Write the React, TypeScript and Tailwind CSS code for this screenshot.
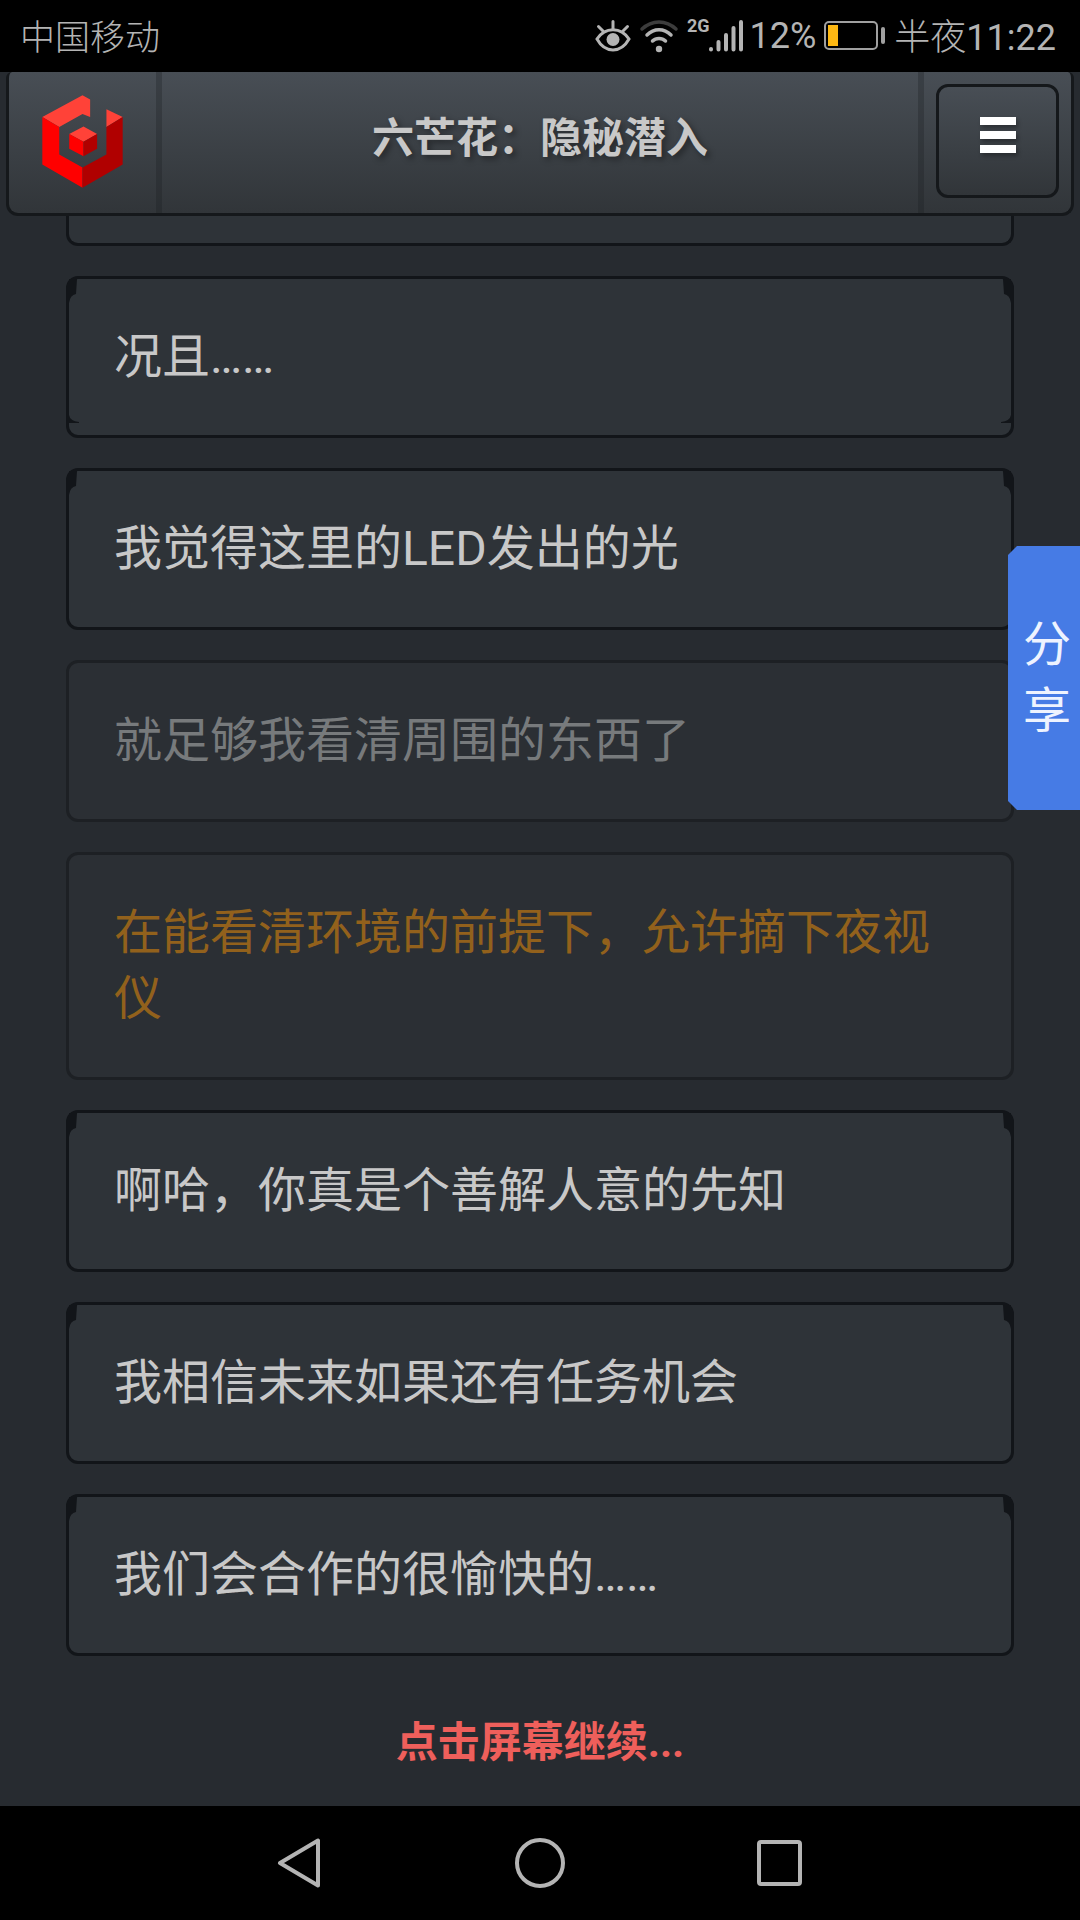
import React from 'react';

type Message = {
    text: string;
    kind: 'active' | 'muted' | 'choice';
    notched?: boolean;
};

const messages: Message[] = [
    { text: '况且……', kind: 'active', notched: true },
    { text: '我觉得这里的LED发出的光', kind: 'active' },
    { text: '就足够我看清周围的东西了', kind: 'muted' },
    { text: '在能看清环境的前提下，允许摘下夜视仪', kind: 'choice' },
    { text: '啊哈，你真是个善解人意的先知', kind: 'active' },
    { text: '我相信未来如果还有任务机会', kind: 'active' },
    { text: '我们会合作的很愉快的……', kind: 'active' },
];

const cardStyles = {
    active: 'border-[#121519] bg-[#2e3338] text-[#c8c8c8]',
    muted: 'border-[#1d2024] bg-[#2b2f34] text-[#777a7c]',
    choice: 'border-[#1d2024] bg-[#2b2f34] text-[#92611c]',
};

const Logo: React.FC = () => (
    <svg viewBox="120 280 256 288" className="w-[85px] h-24" aria-hidden="true">
        <path d="M127 352 L248 286 L271 299 V352 L248 343 L178 382 Z" fill="#ff4238" />
        <path d="M320 328 L369 352 L320 382 Z" fill="#ff4238" />
        <path d="M127 352 L178 382 V465 L248 504 V565 L127 495 Z" fill="#ff0000" />
        <path d="M369 352 V495 L248 565 V504 L320 465 V382 Z" fill="#b00000" />
        <path d="M251 380 L292 403 L251 426 L208 403 Z" fill="#ff4238" />
        <path d="M208 403 L251 426 V470 L208 447 Z" fill="#ff0000" />
        <path d="M292 403 V447 L251 470 V426 Z" fill="#b00000" />
    </svg>
);

const StatusBar: React.FC = () => (
    <div className="h-[72px] bg-black text-[#b4b4b4] flex items-center justify-between pl-5 pr-6 pt-1 text-4xl font-light">
        <span className="text-[35px] pt-0.5">中国移动</span>
        <div className="flex items-center">
            <div className="flex items-center pb-1">
                <svg viewBox="0 0 36 32" className="w-9 h-8 mr-2" fill="none" stroke="currentColor" strokeWidth="3" strokeLinecap="round">
                    <path d="M2 19 C10 6.500 26 6.500 34 19 C26 33.500 10 33.500 2 19 Z" />
                    <path d="M18 9 V1.500 M8 11 L3.500 6.500 M28 11 L32.500 6.500" />
                    <circle cx="18" cy="19.500" r="6.500" fill="currentColor" stroke="none" />
                </svg>
                <svg viewBox="0 0 40 34" className="w-10 h-[34px] mr-2" fill="none" stroke="currentColor" strokeWidth="3.500" strokeLinecap="round">
                    <path d="M3 10 C13 0.500 27 0.500 37 10" stroke="#3c3c3c" />
                    <path d="M8 16 C15 9 25 9 32 16" />
                    <path d="M13.500 22 C17 18.500 23 18.500 26.500 22" />
                    <circle cx="20" cy="30" r="3.200" fill="currentColor" stroke="none" />
                </svg>
                <span className="text-lg leading-5 font-bold self-start">2G</span>
                <svg viewBox="0 0 34 34" className="w-[34px] h-[34px] mr-1.5" stroke="currentColor" strokeWidth="4" strokeLinecap="round">
                    <path d="M2 30 V30.500 M9.500 23 V30.500 M17 16 V30.500 M24.500 9 V30.500 M32 3 V30.500" />
                </svg>
                <span className="mr-2 font-normal">12%</span>
                <svg viewBox="0 0 62 30" className="w-[62px] h-[30px] mr-2">
                    <rect x="1" y="1" width="52" height="27" rx="4" fill="none" stroke="#a0a0a0" strokeWidth="2" />
                    <rect x="4" y="4" width="10" height="21" fill="#fdb813" />
                    <rect x="57" y="6" width="4" height="17" rx="2" fill="#a0a0a0" />
                </svg>
            </div>
            <span>半夜<span className="font-normal">11:22</span></span>
        </div>
    </div>
);

const Header: React.FC = () => (
    <header className="px-1.5 relative">
        <div className="h-36 flex border-3 border-t-0 border-[#15181b] rounded-b-xl rounded-t-md bg-linear-to-b from-[#484e55] via-[#3a3f44] via-60% to-[#313539]">
            <a href="#" aria-label="主页" className="w-[153px] pl-[31px] pt-[21px] border-r-6 border-[#1c1e22]/30">
                <Logo />
            </a>
            <h1 className="flex-1 pt-[37px] text-center text-[42px] leading-[60px] font-bold text-[#c8c8c8] [text-shadow:3px_3px_6px_rgba(0,0,0,0.4)]">
                六芒花：隐秘潜入
            </h1>
            <div className="w-[153px] pl-3 pt-3 border-l-6 border-[#1c1e22]/30">
                <button aria-label="菜单" className="w-[123px] h-[114px] border-3 border-[#15181b] rounded-xl bg-linear-to-b from-[#484e55] via-[#3a3f44] via-60% to-[#313539] flex flex-col items-center gap-1.5 pt-[30px]">
                    <span className="w-9 h-2 bg-white shadow-[2px_3px_4px_rgba(0,0,0,0.3)]" />
                    <span className="w-9 h-2 bg-white shadow-[2px_3px_4px_rgba(0,0,0,0.3)]" />
                    <span className="w-9 h-2 bg-white shadow-[2px_3px_4px_rgba(0,0,0,0.3)]" />
                </button>
            </div>
        </div>
    </header>
);

// dark wedges where the card's inner panel leaves the rounded frame
const CardCorners: React.FC<{ notched?: boolean }> = ({ notched }) => (
    <>
        <svg viewBox="0 0 10 24" className="absolute left-0 top-0 w-2.5 h-6" fill="#121519">
            <path d="M0 0 H8 L7 15 Q1 16 0 24 Z" />
        </svg>
        <svg viewBox="0 0 10 24" className="absolute right-0 top-0 w-2.5 h-6" fill="#121519">
            <path d="M10 0 H2 L3 15 Q9 16 10 24 Z" />
        </svg>
        {notched && (
            <>
                <svg viewBox="0 0 10 8" className="absolute left-0 bottom-3 w-2.5 h-2" fill="#121519">
                    <path d="M0 0 Q1 6 10 7 V8 H0 Z" />
                </svg>
                <svg viewBox="0 0 10 8" className="absolute right-0 bottom-3 w-2.5 h-2" fill="#121519">
                    <path d="M10 0 Q9 6 0 7 V8 H10 Z" />
                </svg>
            </>
        )}
    </>
);

const MessageCard: React.FC<{ message: Message }> = ({ message }) => (
    <div className={`relative border-3 rounded-xl p-[45px] text-5xl leading-[66px] ${cardStyles[message.kind]}`}>
        {message.kind === 'active' && <CardCorners notched={message.notched} />}
        <p>{message.text}</p>
    </div>
);

const NavBar: React.FC = () => (
    <nav className="h-[114px] bg-black text-[#b4b4b4] flex items-center justify-center gap-[190px]">
        <button aria-label="返回">
            <svg viewBox="0 0 50 50" className="w-[50px] h-[50px]" fill="none" stroke="currentColor" strokeWidth="4" strokeLinejoin="round">
                <path d="M5 25 L43 2.500 V47.500 Z" />
            </svg>
        </button>
        <button aria-label="主屏幕">
            <svg viewBox="0 0 50 50" className="w-[50px] h-[50px]" fill="none" stroke="currentColor" strokeWidth="4">
                <circle cx="25" cy="25" r="23" />
            </svg>
        </button>
        <button aria-label="最近任务">
            <svg viewBox="0 0 50 50" className="w-[50px] h-[50px]" fill="none" stroke="currentColor" strokeWidth="4">
                <rect x="4" y="4" width="41" height="42" rx="2" />
            </svg>
        </button>
    </nav>
);

const App: React.FC = () => {
    return (
        <div className="min-h-screen flex flex-col bg-[#272b30] font-[Roboto,'Noto_Sans_CJK_SC',sans-serif]">
            <StatusBar />
            <Header />

            <main className="flex-1 px-[66px]">
                <div className="h-[30px] border-3 border-t-0 rounded-b-xl border-[#121519] bg-[#2e3338]" />
                <div className="mt-[30px] flex flex-col gap-[30px]">
                    {messages.map((message) => (
                        <MessageCard key={message.text} message={message} />
                    ))}
                </div>
                <p className="pt-[57px] pb-[33px] text-center text-[42px] leading-[60px] font-bold text-[#ee5f5b]">
                    点击屏幕继续...
                </p>
            </main>

            <NavBar />

            <button className="fixed right-0 top-[546px] w-[72px] h-[264px] pl-[15px] pr-[9px] bg-[#467be5] text-[#eef3ff] text-5xl leading-[66px] [clip-path:polygon(9px_0,100%_0,100%_100%,9px_100%,0_255px,0_9px)]">
                分享
            </button>
        </div>
    );
};

export default App;
